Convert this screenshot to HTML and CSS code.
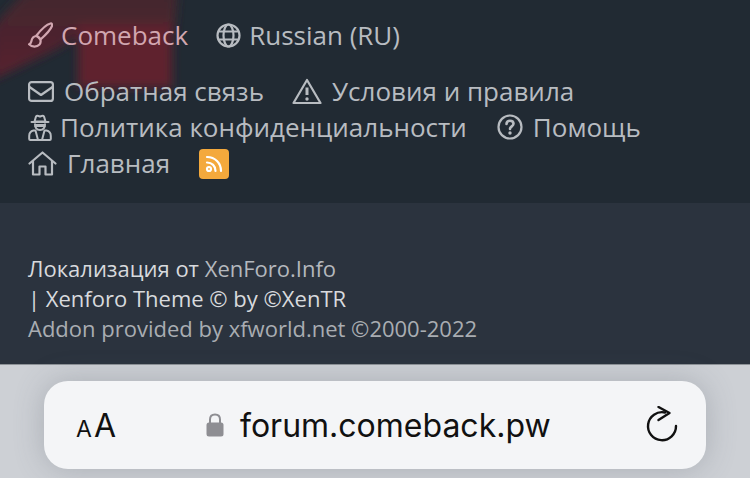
FILE: index.html
```html
<!DOCTYPE html>
<html lang="ru">
<head>
	<meta charset="UTF-8">
	<title>forum.comeback.pw</title>
	<link rel="stylesheet" href="styles.css">
</head>
<body>
	<div class="footer">
		<svg class="glow" width="200" height="110" viewBox="0 0 200 110">
			<defs>
				<filter id="soft" x="-20%" y="-20%" width="140%" height="140%"><feGaussianBlur stdDeviation="5"/></filter>
				<linearGradient id="fade" x1="0" y1="0" x2="0" y2="1">
					<stop offset="0" stop-color="#40282f"/>
					<stop offset="1" stop-color="#581f2e"/>
				</linearGradient>
			</defs>
			<g filter="url(#soft)">
				<path d="M28 -12H178L174 35H80L55 50L-8 80V28Z" fill="url(#fade)"/>
				<path d="M78 24H172V88H78Z" fill="#5f212f"/>
			</g>
		</svg>
		<div class="links lang">
			<a class="link accent" href="#">
				<svg class="ico" width="25" height="26" viewBox="0 0 25 26" fill="none" stroke="currentColor" stroke-width="2.200" stroke-linejoin="round" stroke-linecap="round">
					<path d="M22.500 1.500C18.500 2.500 12 9 8.500 13.500L12.500 17.500C17 13.500 22.500 8 24 4C24.500 2.500 23.800 1.200 22.500 1.500Z"/>
					<path d="M8.500 14C4.500 14 3.800 17 3.300 19.500C3 21.200 2 22 1.100 22.300C4 25.300 9 25.200 11.500 22.500C13.500 20 13 15.500 8.500 14Z"/>
				</svg>
				Comeback
			</a>
			<a class="link" href="#">
				<svg class="ico" width="25" height="25" viewBox="0 0 25 25" fill="none" stroke="currentColor" stroke-width="2.200">
					<circle cx="12.500" cy="12.500" r="11"/>
					<ellipse cx="12.500" cy="12.500" rx="5" ry="11"/>
					<path d="M2 8.500H23M2 16.500H23"/>
				</svg>
				Russian (RU)
			</a>
		</div>
		<div class="links nav">
			<a class="link" href="#">
				<svg class="ico gap-m" width="26" height="21" viewBox="0 0 26 21" fill="none" stroke="currentColor" stroke-width="2.200" stroke-linejoin="round">
					<rect x="1.100" y="1.100" width="23.800" height="18.800" rx="2.500"/>
					<path d="M1.500 6L13 14L24.500 6"/>
				</svg>
				Обратная связь
			</a>
			<a class="link" href="#">
				<svg class="ico warn" width="30" height="27" viewBox="0 0 30 27" fill="none" stroke="currentColor" stroke-width="2.200" stroke-linejoin="round">
					<path d="M15 2L28.500 25H1.500Z"/>
					<path d="M15 9.500V17" stroke-width="3"/>
					<circle cx="15" cy="21" r="1.700" fill="currentColor" stroke="none"/>
				</svg>
				Условия и правила
			</a>
			<a class="link" href="#">
				<svg class="ico" width="24" height="27" viewBox="0 0 24 27" fill="none" stroke="currentColor" stroke-width="2" stroke-linejoin="round">
					<path d="M8 2.500C9 1 10.500 2 12 2.500C13.500 2 15 1 16 2.500L17.500 7.500H6.500Z"/>
					<path d="M3.500 8H20.500" stroke-linecap="round"/>
					<path d="M6.500 11.500H17.500" stroke-width="3"/>
					<path d="M7 9.500C7 14 9.300 16 12 16C14.700 16 17 14 17 9.500"/>
					<path d="M7.500 16.500H5.500C3 17 1.200 19 1.200 22V25C1.200 25.700 1.700 26 2.200 26H21.800C22.300 26 22.800 25.700 22.800 25V22C22.800 19 21 17 18.500 16.500H16.500L14 26H10Z"/>
				</svg>
				Политика конфиденциальности
			</a>
			<a class="link" href="#">
				<svg class="ico gap-m" width="26" height="26" viewBox="0 0 26 26" fill="none" stroke="currentColor" stroke-width="2.200" stroke-linecap="round">
					<circle cx="13" cy="13" r="11.500"/>
					<path d="M9.500 10C9.500 7.800 11 6.800 13 6.800C15 6.800 16.500 8 16.500 9.800C16.500 12.300 13 12.500 13 15" stroke-width="2.600"/>
					<circle cx="13" cy="19" r="1.700" fill="currentColor" stroke="none"/>
				</svg>
				Помощь
			</a>
			<a class="link" href="#">
				<svg class="ico gap-m" width="29" height="25" viewBox="0 0 29 25" fill="none" stroke="currentColor" stroke-width="2.200" stroke-linejoin="round" stroke-linecap="round">
					<path d="M1.500 12.500L14.500 1.500L27.500 12.500"/>
					<path d="M5 10V23.500H11.500V15.500H17.500V23.500H24V10"/>
				</svg>
				Главная
			</a>
			<a class="rss" href="#">
				<svg width="20" height="20" viewBox="0 0 20 20" fill="none" stroke="#fff" stroke-width="2.200" stroke-linecap="round">
					<circle cx="5" cy="15" r="2"/>
					<path d="M3 8.500C8 8.500 11.500 12 11.500 17"/>
					<path d="M3 3C11 3 17 9 17 17"/>
				</svg>
			</a>
		</div>
	</div>
	<div class="credits">
		<div class="credit">Локализация от <a href="#">XenForo.Info</a></div>
		<div class="credit">| Xenforo Theme © by ©XenTR</div>
		<div class="credit dim">Addon provided by xfworld.net ©2000-2022</div>
	</div>
	<div class="browser">
		<div class="urlbar">
			<span class="aa"><small>A</small>A</span>
			<span class="url">
				<svg width="18" height="26" viewBox="0 0 18 26">
					<path d="M4 12V7.500C4 4.500 6 2.500 9 2.500C12 2.500 14 4.500 14 7.500V12" fill="none" stroke="#8e8e93" stroke-width="2"/>
					<rect x="0.500" y="10.500" width="17" height="14" rx="2.500" fill="#8e8e93"/>
				</svg>
				forum.comeback.pw
			</span>
			<svg class="reload" width="32" height="38" viewBox="0 0 32 38" fill="none" stroke="#111" stroke-width="2.400" stroke-linecap="round" stroke-linejoin="round">
				<path d="M19 6.500A14 14 0 1 0 30 20"/>
				<path d="M12.500 1L23.500 7L12.500 14"/>
			</svg>
		</div>
	</div>
</body>
</html>
```

FILE: styles.css
```css
html,body{margin:0;padding:0;}
body{width:750px;height:478px;overflow:hidden;background:#cdd0d5;font-family:"Open Sans","Noto Sans",sans-serif;}
a{color:inherit;text-decoration:none;}

.footer{position:relative;height:203px;box-sizing:border-box;padding:18px 28px 0;background:#212a33;color:#b8bcc1;font-size:26px;overflow:hidden;}
.glow{position:absolute;left:0;top:0;}

.links{position:relative;display:flex;flex-wrap:wrap;align-items:center;}
.lang{column-gap:28px;height:36px;margin-bottom:20px;}
.nav{column-gap:30px;width:640px;}
.link{display:flex;align-items:center;height:36px;margin-top:-1px;margin-bottom:1px;white-space:nowrap;}
.accent{color:#d1a6b0;}
.ico{flex:none;margin-right:8px;}
.gap-m{margin-right:10px;}
.warn{margin-left:-2px;margin-right:10px;}
.rss{display:flex;align-items:center;justify-content:center;width:30px;height:30px;margin-left:-1px;border-radius:4px;background:#f4a93c;}

.credits{height:162px;box-sizing:border-box;padding:50px 28px 0;background:#2b333e;color:#d8dadd;font-size:22px;line-height:30px;border-bottom:1px solid #8d9297;}
.credit a{color:#b4b8bd;}
.dim{color:#a9adb2;}

.browser{display:flex;justify-content:center;padding-top:16px;}
.urlbar{display:flex;align-items:center;width:662px;height:88px;box-sizing:border-box;padding:0 28px 0 32px;border-radius:24px;background:#f4f5f7;color:#111;box-shadow:0 0 30px rgba(90,95,105,.3);font-family:Inter,"Liberation Sans",sans-serif;}
.aa{font-size:32px;width:130px;}
.aa small{font-size:23px;margin-right:2px;}
.url{display:flex;align-items:center;gap:16px;flex:1;font-size:32px;}
.reload{flex:none;}
```
